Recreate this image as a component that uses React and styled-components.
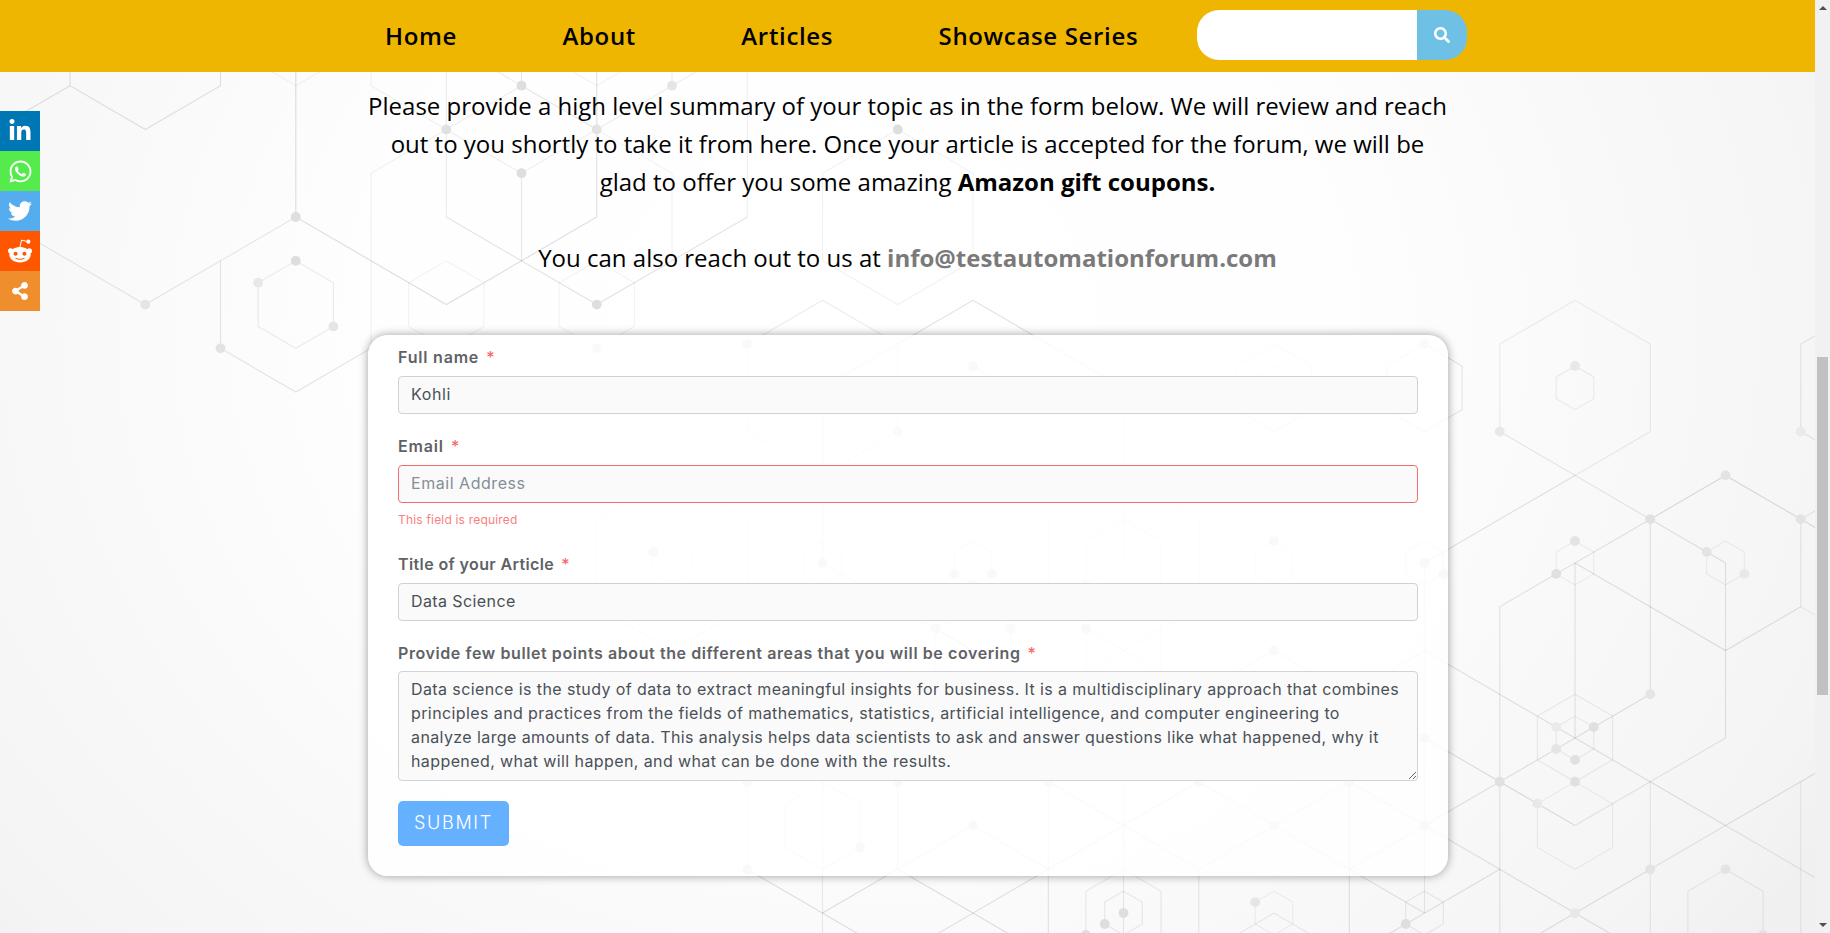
import React from "react";
import styled, { createGlobalStyle } from "styled-components";
import { FaLinkedinIn, FaWhatsapp, FaTwitter, FaRedditAlien, FaSearch, FaShareAlt } from "react-icons/fa";

const GlobalStyle = createGlobalStyle`
  *, *::before, *::after { box-sizing: border-box; }
  html, body { margin: 0; padding: 0; overflow: hidden; }
  body { font-family: "Open Sans", "Noto Sans", sans-serif; color: #000; }
`;

const formFont = `"Inter", "Liberation Sans", sans-serif`;

const Window = styled.div`
  display: flex;
  width: 1830px;
  height: 933px;
  overflow: hidden;
`;

const Page = styled.div`
  position: relative;
  display: flex;
  flex-direction: column;
  flex: 1;
  min-width: 0;
  background: radial-gradient(ellipse 1150px 980px at 850px 330px, #ffffff 0%, #fefefe 42%, #f9f9f9 66%, #f4f4f4 92%, #f0f0f0 100%);
`;

const Backdrop = styled.svg`
  position: absolute;
  inset: 0;
  width: 1815px;
  height: 933px;
`;

const Header = styled.header`
  position: relative;
  display: flex;
  align-items: center;
  height: 72px;
  flex-shrink: 0;
  padding-left: 385px;
  background: #eeb600;
`;

const Nav = styled.nav`
  display: flex;
  gap: 105.4px;
  width: 812px;
`;

const NavLink = styled.a`
  font-size: 24px;
  font-weight: 600;
  line-height: 36px;
  letter-spacing: 0.66px;
  white-space: nowrap;
`;

const Search = styled.form`
  display: flex;
  width: 270px;
  height: 50px;
  margin-bottom: 2px;
  border-radius: 22px;
  overflow: hidden;
`;

const SearchInput = styled.input`
  width: 220px;
  border: 0;
  padding: 0 16px;
  background: #fff;
  outline: none;
`;

const SearchButton = styled.button`
  display: flex;
  align-items: center;
  justify-content: center;
  width: 50px;
  border: 0;
  padding: 0;
  color: #fff;
  background: #6ec1e4;
`;

const Main = styled.main`
  position: relative;
  width: 1080px;
  margin-left: 368px;
`;

const Intro = styled.section`
  height: 263px;
  padding: 15px 1px 0 0;
  font-size: 24px;
  line-height: 38px;
  text-align: center;
  white-space: nowrap;
`;

const Mail = styled.a`
  color: #7a7a7a;
  font-weight: 700;
`;

const Card = styled.form`
  display: flex;
  flex-direction: column;
  height: 541px;
  padding: 10px 30px 0;
  border-radius: 20px;
  background: rgba(255, 255, 255, 0.82);
  box-shadow: 0 0 10px rgba(0, 0, 0, 0.38);
  font-family: ${formFont};
`;

const Field = styled.div`
  display: flex;
  flex-direction: column;
  margin-bottom: 20px;
`;

const Label = styled.label`
  height: ${(p) => p.$height || 31}px;
  color: #606266;
  font-size: 16px;
  font-weight: 600;
  line-height: 24px;
  letter-spacing: ${(p) => p.$track || "0.59px"};
  &::after {
    content: "*";
    margin-left: 7px;
    color: #f56c6c;
    font-weight: 500;
  }
`;

const control = `
  width: 100%;
  border: 1px solid #ced4da;
  border-radius: 4px;
  background: #fafafa;
  color: #495057;
  font-family: ${formFont};
  font-size: 16px;
  font-weight: 400;
  line-height: 24px;
  outline: none;
`;

const Input = styled.input`
  ${control}
  height: 38px;
  padding: 0 12px 2px;
  letter-spacing: ${(p) => p.$track || "0.5px"};
  border-color: ${(p) => (p.$invalid ? "#f56c6c" : "#ced0da")};
  &::placeholder { color: #868e96; opacity: 1; }
`;

const TextArea = styled.textarea`
  ${control}
  display: block;
  height: 110px;
  padding: 5px 4px 5px 12px;
  overflow: hidden;
  resize: vertical;
  letter-spacing: 0.4px;
`;

const ErrorText = styled.div`
  height: 29px;
  padding-top: 6px;
  color: #f98080;
  font-size: 12px;
  line-height: 22px;
  letter-spacing: 0.19px;
`;

const Submit = styled.button`
  width: 111px;
  height: 45px;
  padding: 0 0 2px;
  border: 0;
  border-radius: 5px;
  background: #66b1ff;
  color: #fff;
  font-family: ${formFont};
  font-size: 18px;
  font-weight: 300;
  letter-spacing: 1.7px;
`;

const ShareBar = styled.aside`
  position: absolute;
  left: 0;
  top: 111px;
  display: flex;
  flex-direction: column;
`;

const ShareLink = styled.a`
  display: flex;
  align-items: center;
  justify-content: center;
  width: 40px;
  height: 40px;
  color: #fff;
  background: ${(p) => p.$color};
`;

const ScrollTrack = styled.div`
  display: flex;
  flex-direction: column;
  align-items: center;
  width: 15px;
  padding: 6px 0;
  background: #f1f1f1;
`;

const ScrollThumb = styled.div`
  width: 11px;
  height: 338px;
  margin: 347px 0 auto;
  background: #c1c1c1;
`;

const Arrow = styled.div`
  width: 0;
  height: 0;
  border: 4px solid transparent;
  ${(p) => (p.$up ? "border-top: 0; border-bottom-color: #505050;" : "border-bottom: 0; border-top-color: #505050;")}
`;

/* Two stacked tiles of the same honeycomb lattice: only the vertical origin differs. */
const UPPER = 85.7;
const LOWER = 300.3;
const px = (i) => 70 + 75.25 * i;
const py = (origin, j) => origin + 43.77 * j;

/* [opacity, "col,row col,row ..."] */
const upperLines = [
  [0.11, "0,-1 0,0 1,1 2,0 2,-1"], [0.11, "0,0 -1,1"],
  [0.13, "3,-1 3,3 5,5 7,3 7,-1"], [0.05, "2,-1 3,0 4,-1"],
  [0.09, "-1,3 1,5 3,3"], [0.1, "2,4 2,6 3,7 4,6"],
  [0.06, "4,6 4,2 5,1 4,0 4,-1"],
  [0.1, "6,-1 6,0 7,1"], [0.07, "5,-1 6,0 5,1 6,2 7,1 9,-1"],
  [0.08, "5,-1 5,3"], [0.11, "5,3 7,5 9,3"], [0.07, "9,3 9,-1"],
  [0.09, "6,2 6,4"], [0.05, "7,1 8,2 8,4"], [0.06, "6,-1 7,0 8,-1"],
  [0.08, "8,-1 8,0"], [0.055, "11,1 12,2 12,4 11,5 10,4 10,2 11,1"],
];
const lowerLines = [
  [0.08, "10,0 11,1 11,3 10,4 9,3 9,1 10,0"], [0.12, "14,2 12,0 10,2"], [0.1, "10,2 10,6 12,8"],
  [0.08, "7,5 8,4 9,5 9,7 8,8 7,7 7,5"],
  [0.08, "14,2 14,6 13,7"], [0.08, "13,7 13,5 14,4 15,5 15,7"],
  [0.08, "13.5,8.5 13.5,5.5 14,5 14.5,5.5 14.5,8.5"],
  [0.08, "11.5,8.5 11.5,7.5 12.5,8.5 12.5,7.5 11.5,8.5"], [0.08, "11.5,7.5 12,7 12.5,7.5"],
  [0.08, "13.5,7.5 14.5,8.5"], [0.08, "13.5,8.5 15,7"], [0.09, "15,9 16,8 17,9"],
  [0.11, "18,6 20,4"], [0.08, "18,6 18,14"], [0.09, "17,9 18,8"],
  [0.08, "9,11 9,13"], [0.12, "9,13 11,15"], [0.12, "10,14 11,13 11,11"],
  [0.08, "10,11 10,15"], [0.12, "11,13 13,15"], [0.1, "11,13 12,12 13,13"],
  [0.1, "13,11 13,15"], [0.1, "13,11 15,13"], [0.11, "15,11 11,15"],
  [0.09, "14,10 14,15"], [0.1, "15,11 18,14"], [0.09, "17,11 15,13 15,15"],
  [0.11, "17,11 17,15"], [0.1, "17,11 19,13"], [0.1, "18,12 17,13"],
  [0.07, "20,4 21,3 21,1 20,0 19,1 19,3"], [0.09, "19,3 21,5"],
  [0.13, "21,5 22,4 24,6"], [0.09, "24,0 23,1 23,3 24,4 23,5 23,7"],
  [0.1, "21,5 19,7 19,15"], [0.1, "21,5 21,9"], [0.1, "21,5 22,6 22,10"],
  [0.1, "20,6 20,10"], [0.11, "20,6 22,8 23,7"], [0.06, "23,7 24,8"],
  [0.09, "22,10 20,12"], [0.12, "20,12 17,9"], [0.11, "18,8 22,12"], [0.09, "22,12 24,14"],
  [0.11, "19,11 21,9"], [0.1, "19,11 18,12"], [0.08, "21,11 21,15"],
  [0.11, "24,10 22,12"], [0.09, "22,12 21,13"], [0.11, "21,13 19,15"],
  [0.07, "23,11 23,15"], [0.11, "19,13 21,15"], [0.11, "19,13 17,15"],
  [0.08, "15.5,14.5 16,14 16.5,14.5"],
];

/* [opacity, col, row, size] */
const upperHexes = [[0.08, 3, 5, 0.5], [0.05, 5, 5, 0.5], [0.05, 7, 5, 0.5]];
const lowerHexes = [
  [0.07, 8, 6, 0.25], [0.07, 10, 6, 0.25], [0.07, 12, 2, 0.25], [0.09, 16, 2, 0.5],
  [0.07, 16, 2, 0.25], [0.1, 18, 2, 0.5], [0.08, 12, 6, 0.25], [0.08, 16, 6, 0.25],
  [0.08, 18, 6, 0.25], [0.08, 10, 12, 0.5], [0.08, 14, 14, 0.5], [0.08, 14, 14, 0.25],
  [0.06, 16, 14, 0.25], [0.08, 18, 14, 0.25], [0.07, 20, 2, 0.25], [0.06, 22, 6, 0.25],
  [0.06, 20, 6, 0.25], [0.07, 20, 10, 0.5], [0.07, 20, 10, 0.25], [0.06, 20, 12, 0.5],
  [0.07, 22, 14, 0.5],
];

const upperDots = [
  [0.12, 3, 3], [0.09, 1, 5], [0.1, 2, 6], [0.12, 3, 4], [0.08, 2.5, 4.5], [0.09, 3.5, 5.5],
  [0.12, 6, 0], [0.09, 8, 0], [0.11, 5, 1], [0.1, 7, 1], [0.12, 6, 2], [0.12, 7, 5],
  [0.12, 11, 1], [0.1, 7, 6],
];
const lowerDots = [
  [0.12, 9, 1], [0.1, 11, 3], [0.12, 10, 6], [0.12, 7.75, 5.75], [0.12, 12, 1.5],
  [0.1, 18, 1], [0.12, 11.75, 6.25], [0.12, 12.25, 6.25], [0.1, 12, 6.5], [0.1, 13.5, 6.5],
  [0.12, 16, 5.5], [0.12, 18, 6], [0.12, 18.25, 6.25], [0.1, 11.5, 7.5], [0.1, 12.5, 7.5],
  [0.12, 13.5, 7.5], [0.12, 16, 8], [0.12, 18, 10], [0.12, 9, 11], [0.12, 11, 11],
  [0.12, 13, 11], [0.12, 15, 11], [0.12, 17, 11], [0.12, 9, 13], [0.12, 10.5, 12.5],
  [0.12, 12, 12], [0.1, 16, 12], [0.12, 18, 12], [0.12, 14, 14], [0.12, 13.75, 14.25],
  [0.12, 13.5, 14.5], [0.09, 15.75, 13.75], [0.12, 17.75, 14.25], [0.08, 19, 3],
  [0.08, 20, 1.5], [0.11, 21, 5], [0.1, 22, 4], [0.1, 23, 5], [0.07, 23, 3],
  [0.11, 19.75, 6.25], [0.1, 20, 5.5], [0.1, 21.75, 5.75], [0.08, 22.25, 6.25],
  [0.09, 21, 9], [0.07, 19.75, 9.75], [0.11, 20.25, 9.75], [0.09, 19.75, 10.25],
  [0.11, 20, 10.5], [0.11, 20, 11], [0.08, 19.5, 11.5], [0.11, 19, 11], [0.1, 21, 13],
  [0.08, 20, 14], [0.1, 22, 13], [0.1, 22.5, 14.5],
];

const dotColor = (o) => {
  const v = Math.round(252 * (1 - o));
  return `rgb(${v}, ${v}, ${v})`;
};

function Lattice({ origin, lines, hexes, dots }) {
  const at = (i, j) => `${px(i).toFixed(1)},${py(origin, j).toFixed(1)}`;
  const outline = (x, y, s) =>
    [[0, -2], [1, -1], [1, 1], [0, 2], [-1, 1], [-1, -1]]
      .map(([dx, dy]) => at(x + dx * s, y + dy * s))
      .join(" ");
  return (
    <g fill="none" stroke="#000" strokeWidth="1.1">
      {lines.map(([o, pts], n) => (
        <polyline key={n} strokeOpacity={o} points={pts.split(" ").map((p) => at(...p.split(",").map(Number))).join(" ")} />
      ))}
      {hexes.map(([o, x, y, s], n) => (
        <polygon key={n} strokeOpacity={o} points={outline(x, y, s)} />
      ))}
      {dots.map(([o, x, y], n) => (
        <circle key={n} cx={px(x)} cy={py(origin, y)} r="4.9" fill={dotColor(o)} stroke="none" />
      ))}
    </g>
  );
}

const article = [
  "Data science is the study of data to extract meaningful insights for business. It is a multidisciplinary approach that combines",
  "principles and practices from the fields of mathematics, statistics, artificial intelligence, and computer engineering to",
  "analyze large amounts of data. This analysis helps data scientists to ask and answer questions like what happened, why it",
  "happened, what will happen, and what can be done with the results.",
].join("\n");

export default function App() {
  return (
    <Window>
      <GlobalStyle />
      <Page>
        <Backdrop>
          <Lattice origin={UPPER} lines={upperLines} hexes={upperHexes} dots={upperDots} />
          <Lattice origin={LOWER} lines={lowerLines} hexes={lowerHexes} dots={lowerDots} />
        </Backdrop>
        <Header>
          <Nav>
            <NavLink>Home</NavLink>
            <NavLink>About</NavLink>
            <NavLink>Articles</NavLink>
            <NavLink>Showcase Series</NavLink>
          </Nav>
          <Search>
            <SearchInput aria-label="Search" />
            <SearchButton type="button" aria-label="Search"><FaSearch size={16} /></SearchButton>
          </Search>
        </Header>
        <Main>
          <Intro>
            Please provide a high level summary of your topic as in the form below. We will review and reach<br />
            out to you shortly to take it from here. Once your article is accepted for the forum, we will be<br />
            glad to offer you some amazing <b>Amazon gift coupons.</b><br />
            <br />
            You can also reach out to us at <Mail>info@testautomationforum.com</Mail>
          </Intro>
          <Card>
            <Field>
              <Label $track="0.8px">Full name</Label>
              <Input defaultValue="Kohli" $track="0.6px" />
            </Field>
            <Field>
              <Label $track="0.85px">Email</Label>
              <Input $invalid placeholder="Email Address" $track="0.54px" />
              <ErrorText>This field is required</ErrorText>
            </Field>
            <Field>
              <Label $track="0.38px">Title of your Article</Label>
              <Input defaultValue="Data Science" $track="0.4px" />
            </Field>
            <Field>
              <Label $height={30}>Provide few bullet points about the different areas that you will be covering</Label>
              <TextArea defaultValue={article} spellCheck={false} />
            </Field>
            <Submit type="button">SUBMIT</Submit>
          </Card>
        </Main>
        <ShareBar>
          <ShareLink $color="#0077b5"><FaLinkedinIn size={24} /></ShareLink>
          <ShareLink $color="#55eb4c"><FaWhatsapp size={25} /></ShareLink>
          <ShareLink $color="#55acee"><FaTwitter size={24} /></ShareLink>
          <ShareLink $color="#ff5700"><FaRedditAlien size={26} /></ShareLink>
          <ShareLink $color="#ee8e2d"><FaShareAlt size={18} /></ShareLink>
        </ShareBar>
      </Page>
      <ScrollTrack>
        <Arrow $up />
        <ScrollThumb />
        <Arrow />
      </ScrollTrack>
    </Window>
  );
}
